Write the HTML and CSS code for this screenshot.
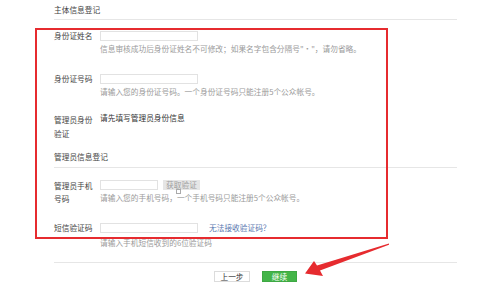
FILE: index.html
```html
<!DOCTYPE html>
<html>
<head>
<meta charset="utf-8">
<link rel="stylesheet" href="styles.css">
</head>
<body>
<div class="page">
  <div class="section-title first">主体信息登记</div>

  <div class="row r1">
    <div class="label">身份证姓名</div>
    <div class="field">
      <div class="input"></div>
      <div class="hint">信息审核成功后身份证姓名不可修改；如果名字包含分隔号"·"，请勿省略。</div>
    </div>
  </div>

  <div class="row r2">
    <div class="label">身份证号码</div>
    <div class="field">
      <div class="input"></div>
      <div class="hint">请输入您的身份证号码。一个身份证号码只能注册5个公众帐号。</div>
    </div>
  </div>

  <div class="row r3">
    <div class="label tall">管理员身份验证</div>
    <div class="field">
      <div class="plain">请先填写管理员身份信息</div>
    </div>
  </div>

  <div class="section-title second">管理员信息登记</div>

  <div class="row r4">
    <div class="label mid">管理员手机号码</div>
    <div class="field">
      <div class="inline">
        <div class="input short"></div>
        <div class="getcode">获取验证</div>
      </div>
      <div class="hint">请输入您的手机号码，<span class="glyph-wrap"><span class="glyph"></span>一</span>个手机号码只能注册5个公众帐号。</div>
    </div>
  </div>

  <div class="row r5">
    <div class="label">短信验证码</div>
    <div class="field">
      <div class="inline">
        <div class="input"></div>
        <a class="link">无法接收验证码？</a>
      </div>
      <div class="hint h5">请输入手机短信收到的6位验证码</div>
    </div>
  </div>

  <div class="actions">
    <div class="btn prev">上一步</div>
    <div class="btn next">继续</div>
  </div>
</div>

<div class="redbox"></div>
<svg class="arrow" width="500" height="293" viewBox="0 0 500 293">
  <polygon points="389,243.5 317,265.5 314,261 305,273.5 323,276 320,270.5 389,244.8" fill="#e62b2f"/>
</svg>
</body>
</html>
```
FILE: styles.css
```css
* { box-sizing: border-box; }
html, body { margin: 0; padding: 0; background: #fff; }
body {
  font-family: "Noto Sans CJK SC", "Noto Sans", sans-serif;
  font-size: 7.7px;
  color: #444;
  position: relative;
  width: 500px;
  height: 293px;
  overflow: hidden;
}
.page {
  margin-left: 54px;
  width: 403px;
}
.section-title {
  line-height: 12px;
  border-bottom: 1px solid #e6e6e6;
}
.section-title.first { padding-top: 4px; padding-bottom: 3px; }
.section-title.second { margin-top: 10px; padding-bottom: 4px; }

.row { display: flex; align-items: flex-start; }
.label {
  width: 42px;
  margin-right: 4px;
  line-height: 12px;
  flex-shrink: 0;
}
.field { display: flex; flex-direction: column; }
.input {
  width: 98px;
  height: 10px;
  border: 1px solid #e2e2e2;
  background: #fff;
}
.input.short { width: 58px; }
.hint {
  color: #9a9a9a;
  line-height: 12px;
  margin-top: 2px;
  white-space: nowrap;
}
.r1 { margin-top: 11px; }
.r1 .label { margin-top: -1px; }
.r2 { margin-top: 19px; }
.r2 .label { margin-top: -1px; }
.r3 { margin-top: 15px; }
.label.tall { line-height: 14px; margin-top: 0; }
.plain { line-height: 12px; color: #333; margin-top: -1px; }
.r4 { margin-top: 12px; }
.label.mid { line-height: 13px; margin-top: -1px; }
.inline { display: flex; align-items: center; }
.getcode {
  margin-left: 5px;
  width: 37px;
  height: 10px;
  line-height: 10px;
  background: #e6e6e6;
  color: #a0a0a0;
  text-align: center;
}
.r4 .hint { margin-top: 2px; }
.glyph-wrap { position: relative; }
.glyph {
  position: absolute;
  left: -1px;
  top: -3px;
  width: 5px;
  height: 5px;
  border: 1px solid #aaa;
  background: #fff;
}
.r5 { margin-top: 17px; }
.r5 .label { margin-top: 0; }
.link {
  margin-left: 11px;
  color: #5a78b0;
  line-height: 12px;
}
.hint.h5 { margin-top: 3px; }

.actions {
  margin-top: 13px;
  border-top: 1px solid #e6e6e6;
  padding-top: 8px;
  display: flex;
  justify-content: center;
  gap: 12px;
}
.btn {
  width: 36px;
  height: 11px;
  line-height: 9px;
  text-align: center;
}
.btn.prev {
  background: #fff;
  border: 1px solid #dcdcdc;
  color: #333;
}
.btn.next {
  width: 35px;
  background: #44b549;
  border: 1px solid #3ea843;
  color: #fff;
}

.redbox {
  position: absolute;
  left: 35px;
  top: 28px;
  width: 353px;
  height: 211px;
  border: 2px solid #e62b2f;
}
.arrow {
  position: absolute;
  left: 0;
  top: 0;
}
```
